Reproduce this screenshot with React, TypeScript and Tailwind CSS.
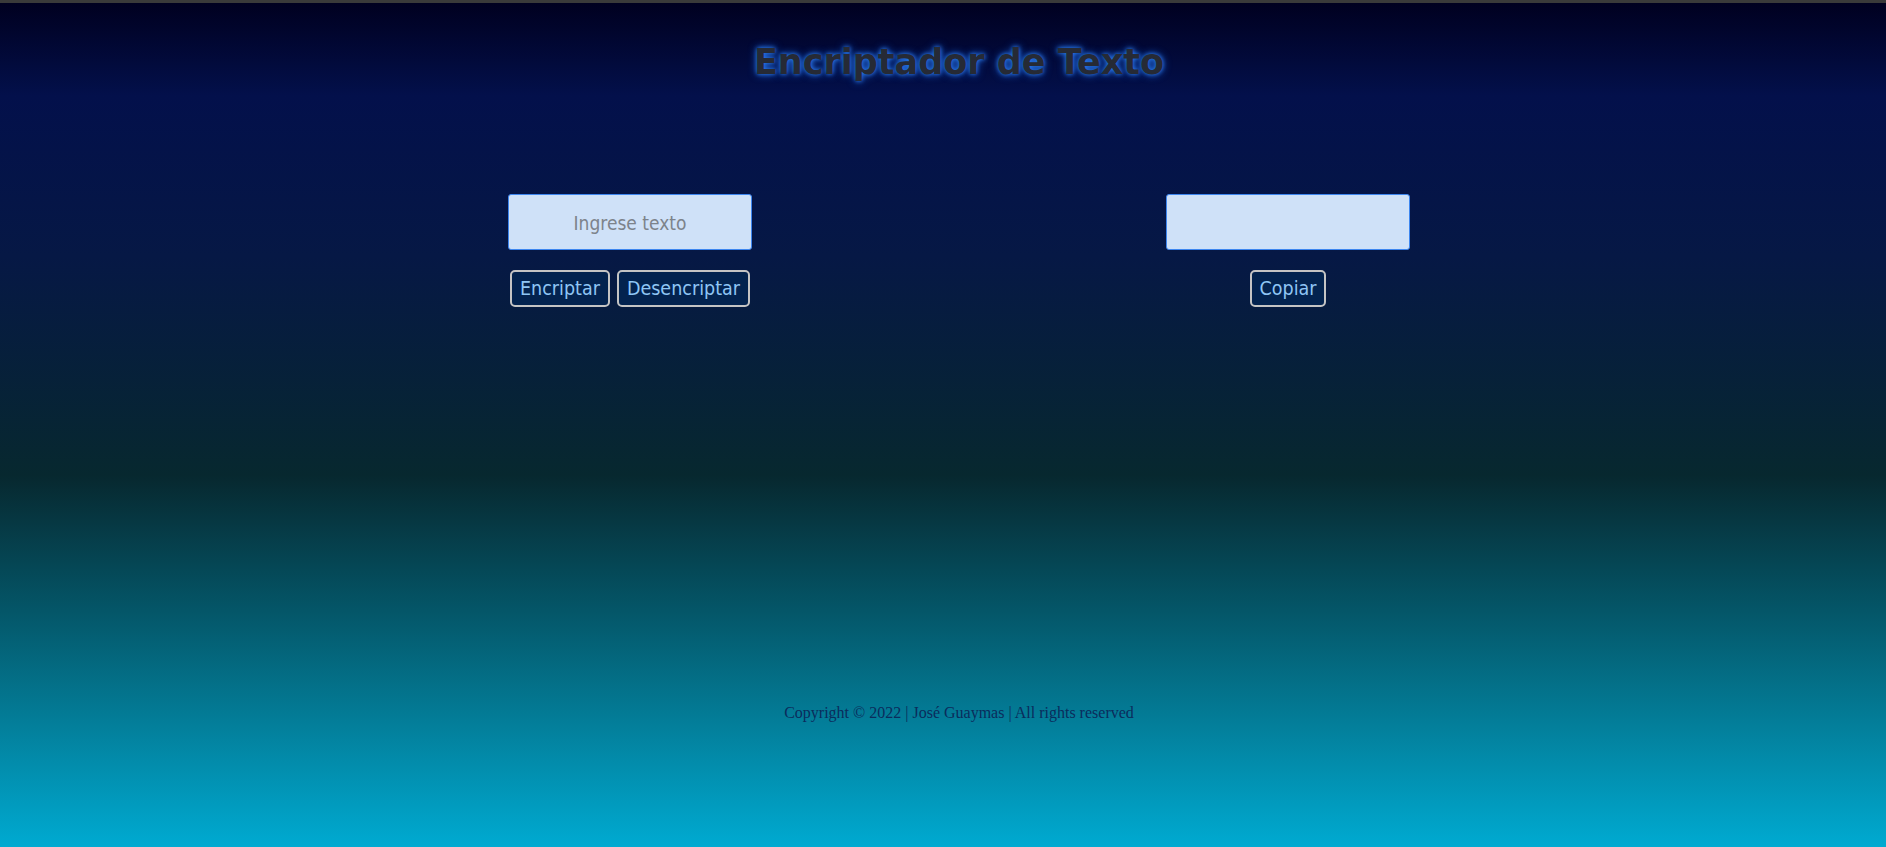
import React from "react";

const Boton = ({ children }: { children: React.ReactNode }) => {
  return (
    <button className="h-[37px] rounded-[5px] border-2 border-[#c4c4c4] bg-[#03234f] px-[8px] text-[19.5px] leading-none text-[#8fc6f5] font-['Tahoma','DejaVu_Sans_Condensed','Roboto',sans-serif]">
      {children}
    </button>
  );
};

const App = () => {
  return (
    <main className="flex min-h-[847px] flex-col border-t-[3px] border-[#3a3a3a] bg-[linear-gradient(to_bottom,#000020_0%,#03104b_11%,#061845_30%,#07282f_56%,#045668_72%,#03809c_86%,#00aad1_100%)]">
      <header className="flex justify-center pl-[32px] pt-[42px]">
        <h1 className="text-[35px] font-bold leading-none text-[#262a35] font-['Verdana','DejaVu_Sans',sans-serif] [text-shadow:0_0_4px_#2a7ef2,0_0_9px_#1f68e0]">
          Encriptador de Texto
        </h1>
      </header>

      <section className="flex pl-[508px] pt-[114px]">
        <div className="flex w-[244px] flex-col items-center gap-[20px]">
          <textarea
            placeholder="Ingrese texto"
            className="h-[56px] w-[244px] resize-none rounded-[3px] border border-[#3d86f0] bg-[#cfe1f8] pt-[15px] text-center text-[19px] leading-[26px] text-[#333] outline-none placeholder:text-[#7d838b] font-['Tahoma','DejaVu_Sans_Condensed','Roboto',sans-serif]"
          />
          <div className="flex gap-[7px]">
            <Boton>Encriptar</Boton>
            <Boton>Desencriptar</Boton>
          </div>
        </div>

        <div className="ml-[414px] flex w-[244px] flex-col items-center gap-[20px]">
          <textarea className="h-[56px] w-[244px] resize-none rounded-[3px] border border-[#3d86f0] bg-[#cfe1f8] outline-none" />
          <Boton>Copiar</Boton>
        </div>
      </section>

      <footer className="flex justify-center pl-[32px] pt-[394px]">
        <p className="text-[16px] text-[#0b2c5c] font-['Times_New_Roman','Liberation_Serif',serif]">
          Copyright © 2022 | José Guaymas | All rights reserved
        </p>
      </footer>
    </main>
  );
};

export default App;
